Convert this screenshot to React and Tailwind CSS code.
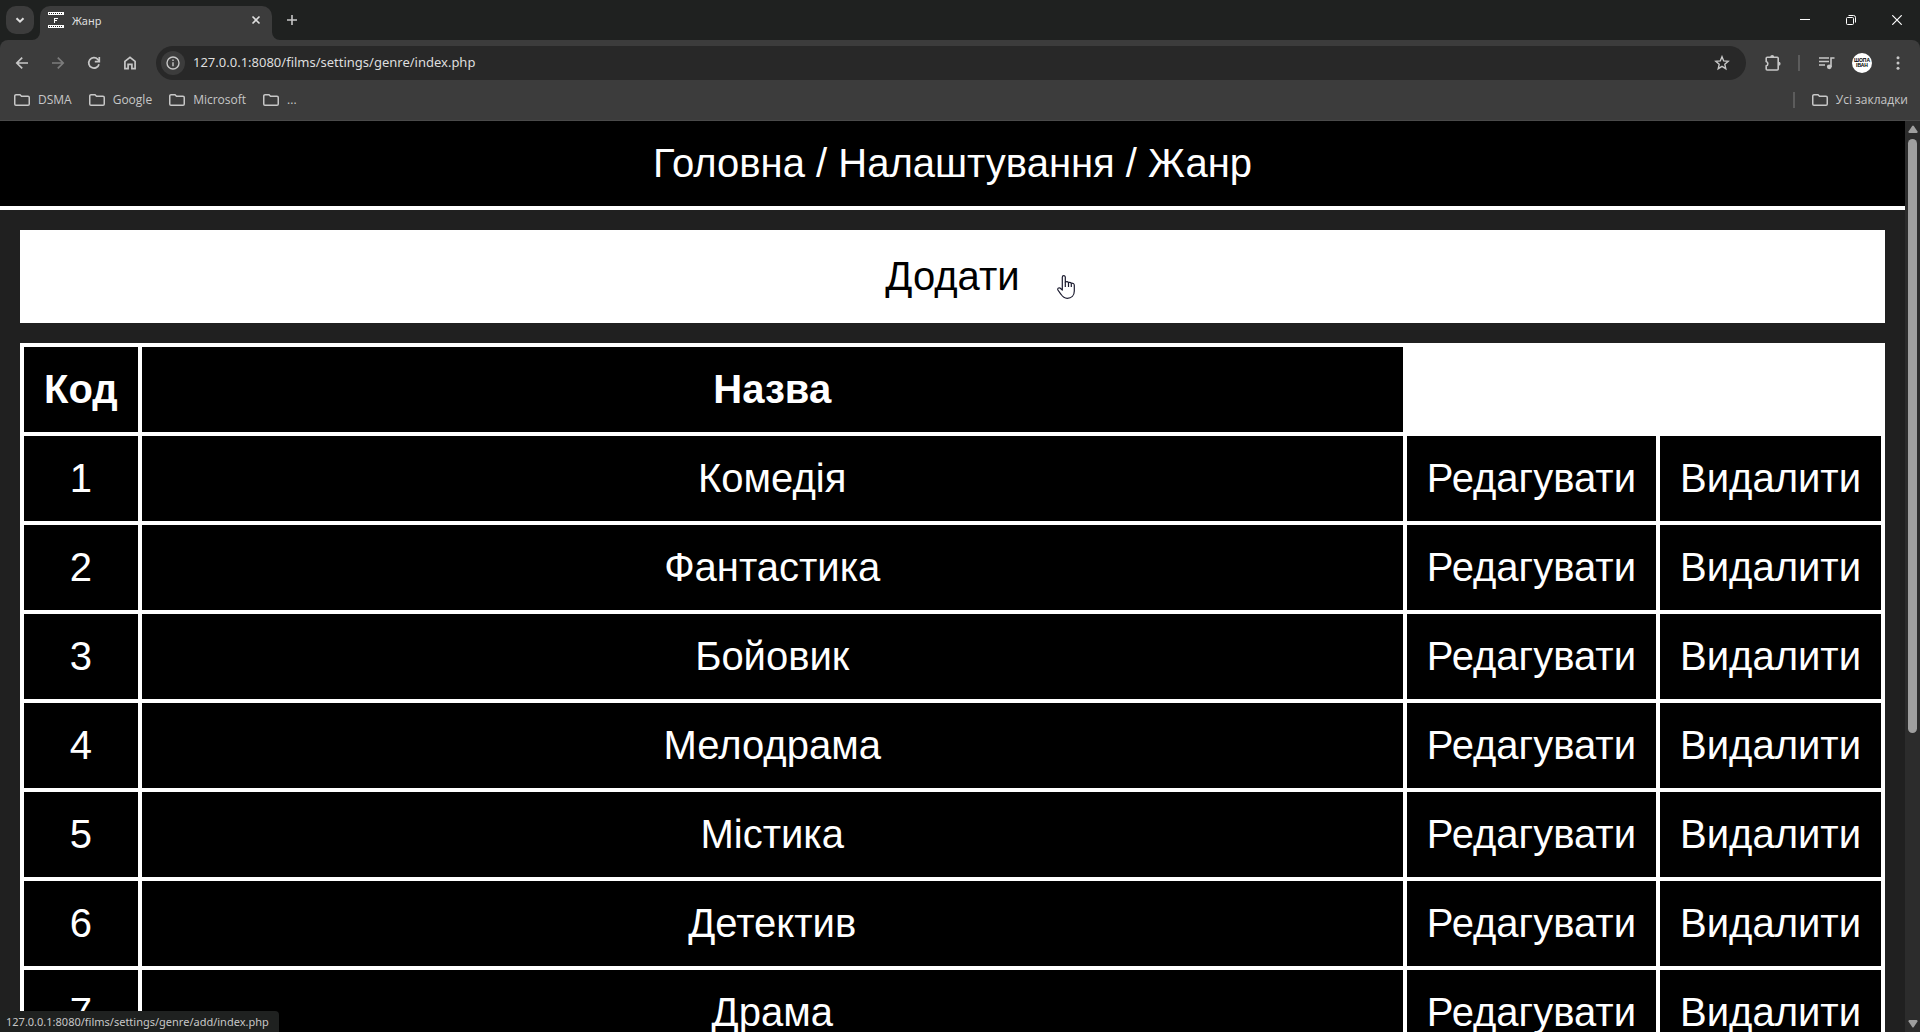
const genres = ['Комедія', 'Фантастика', 'Бойовик', 'Мелодрама', 'Містика', 'Детектив', 'Драма', 'Жахи', 'Трилер', 'Пригоди'];
const bookmarks = ['DSMA', 'Google', 'Microsoft', '...'];

function Icon({ size = 20, sw = 1.7, className = '', children }) {
  return (
    <svg
      width={size}
      height={size}
      viewBox={`0 0 ${size} ${size}`}
      fill="none"
      stroke="currentColor"
      strokeWidth={sw}
      className={`shrink-0 ${className}`}
      aria-hidden="true"
    >
      {children}
    </svg>
  );
}

function FolderIcon() {
  return (
    <svg width="16" height="12" viewBox="0 0 16 12" fill="none" stroke="currentColor" strokeWidth="1.5" className="shrink-0" aria-hidden="true">
      <path d="M.75 2A1.25 1.25 0 0 1 2 .75H6l1.5 1.5H14A1.25 1.25 0 0 1 15.25 3.5V10A1.25 1.25 0 0 1 14 11.25H2A1.25 1.25 0 0 1 .75 10Z" />
    </svg>
  );
}

function TabStrip() {
  return (
    <div className="flex h-10 shrink-0 items-start bg-[#1f2120] text-[#dedede]">
      <button aria-label="Пошук вкладок" className="mt-1.5 ml-1.5 flex size-7 items-center justify-center rounded-[10px] bg-[#3c3c3c]">
        <Icon size={10} sw={2}><path d="M1.5 3.2 5 6.7l3.5-3.5" /></Icon>
      </button>
      <div className="flex pt-1.5">
        <div className="-ml-0.5 flex w-2 items-end self-stretch">
          <svg width="8" height="8" viewBox="0 0 8 8" className="block" aria-hidden="true"><path d="M8 0v8H0a8 8 0 0 0 8-8Z" fill="#3c3c3c" /></svg>
        </div>
        <div className="flex h-[34px] w-[232px] items-center rounded-t-[10px] bg-[#3c3c3c] pr-2.5 pb-1.5 pl-2">
          <svg width="16" height="16" viewBox="0 0 16 16" shapeRendering="crispEdges" aria-hidden="true">
            <path d="M0 0h16v3H0zM0 13h16v3H0z" fill="#fff" />
            <path d="M1 1h1v1H1zM3 1h1v1H3zM5 1h1v1H5zM7 1h1v1H7zM9 1h1v1H9zM11 1h1v1h-1zM13 1h1v1h-1zM1 14h1v1H1zM3 14h1v1H3zM5 14h1v1H5zM7 14h1v1H7zM9 14h1v1H9zM11 14h1v1h-1zM13 14h1v1h-1z" fill="#222" />
            <path d="M6 6h4v1H7v1h2v1H7v2H6z" fill="#fff" />
          </svg>
          <span className="ml-2 flex-1 pt-0.5 text-[11px]">Жанр</span>
          <button aria-label="Закрити вкладку" className="flex size-3">
            <Icon size={12} sw={1.6}><path d="m2.5 2.5 7 7m0-7-7 7" /></Icon>
          </button>
        </div>
        <div className="flex w-2 items-end">
          <svg width="8" height="8" viewBox="0 0 8 8" className="block" aria-hidden="true"><path d="M0 0v8h8a8 8 0 0 1-8-8Z" fill="#3c3c3c" /></svg>
        </div>
      </div>
      <button aria-label="Нова вкладка" className="ml-1.5 flex h-10 items-center text-[#c7c7c7]">
        <Icon size={12} sw={1.6}><path d="M6 1v10M1 6h10" /></Icon>
      </button>
      <div className="ml-auto flex text-white">
        <button aria-label="Згорнути" className="flex h-10 w-[46px] items-center justify-center">
          <Icon size={10} sw={1}><path d="M0 4.5h10" /></Icon>
        </button>
        <button aria-label="Відновити" className="flex h-10 w-[46px] items-center justify-center">
          <Icon size={10} sw={1}>
            <rect x=".5" y="2.5" width="7" height="7" rx="1" />
            <path d="M2.5 .5h5a2 2 0 0 1 2 2v5" />
          </Icon>
        </button>
        <button aria-label="Закрити" className="flex h-10 w-[46px] items-center justify-center">
          <Icon size={10} sw={1.2}><path d="m.3.3 9.4 9.4m0-9.4L.3 9.7" /></Icon>
        </button>
      </div>
    </div>
  );
}

function NavButton({ label, className = '', children }) {
  return (
    <button aria-label={label} className={`flex w-9 justify-center ${className}`}>
      <Icon size={16} sw={1.7}>{children}</Icon>
    </button>
  );
}

function Toolbar() {
  return (
    <div className="flex h-[46px] items-center bg-[#3c3c3c] pr-3.5 pl-1 text-[#c7c7c7]">
      <NavButton label="Назад"><path d="M14 8H3m5.2-5.4L2.8 8l5.4 5.4" /></NavButton>
      <NavButton label="Вперед" className="text-[#7c7c7c]"><path d="M2 8h11M7.8 2.6 13.2 8l-5.4 5.4" /></NavButton>
      <NavButton label="Оновити">
        <path d="M13 9.2A5.2 5.2 0 1 1 11.8 4.4L13.2 6" />
        <path d="M13.3 2v4.6H8.8" />
      </NavButton>
      <NavButton label="Домашня сторінка">
        <path d="M2.9 6.4 8 2.4l5.1 4v7.3H9.9V9.4H6.1v4.3H2.9Z" />
      </NavButton>
      <div className="ml-2 flex h-[34px] flex-1 items-center rounded-full bg-[#282828] pr-4 pl-[5px]">
        <button aria-label="Відомості про сайт" className="flex size-6 items-center justify-center rounded-full bg-[#3c3c3c]">
          <Icon size={14} sw={1.4}>
            <circle cx="7" cy="7" r="6" />
            <path d="M7 6.2v4M7 3.6v1.5" />
          </Icon>
        </button>
        <input
          aria-label="Адреса"
          defaultValue="127.0.0.1:8080/films/settings/genre/index.php"
          className="ml-2 min-w-0 flex-1 bg-transparent text-[13px] text-[#dedede] outline-none"
        />
        <button aria-label="Додати закладку">
          <Icon size={16} sw={1.4}>
            <path d="m8 1.7 1.7 4.2 4.5.4-3.4 3 1 4.4L8 11.4l-3.8 2.3 1-4.4-3.4-3 4.5-.4Z" />
          </Icon>
        </button>
      </div>
      <button aria-label="Розширення" className="ml-[18px]">
        <Icon size={18} sw={1.6}>
          <path d="M3.2 3.3h10a1 1 0 0 1 1 1V15a1 1 0 0 1-1 1h-10a1 1 0 0 1-1-1v-3.1a2.3 2.3 0 0 0 0-4.4V4.3a1 1 0 0 1 1-1Z" />
          <path d="M6.2 3a2 2 0 0 1 4 0ZM14.6 7.700a2 2 0 0 1 0 4Z" fill="currentColor" stroke="none" />
        </Icon>
      </button>
      <span className="ml-4 h-4 w-0.5 bg-[#5c5c5c]" />
      <button aria-label="Керування медіа" className="ml-[18px]">
        <Icon size={18} sw={1.6}>
          <path d="M1 4h10M1 7.5h10M1 11h6M13 13V4h3.5" />
          <circle cx="11.3" cy="12.8" r="2.4" fill="currentColor" stroke="none" />
        </Icon>
      </button>
      <button
        aria-label="Профіль"
        className="ml-4 flex size-5 flex-col items-center justify-center rounded-full bg-white font-['Liberation_Sans',sans-serif] text-[5px] leading-[5px] font-bold text-black"
      >
        <span>ШОПА</span>
        <span>ІВАН</span>
      </button>
      <button aria-label="Меню" className="ml-[18px]">
        <svg width="16" height="16" viewBox="0 0 16 16" fill="currentColor" aria-hidden="true">
          <circle cx="8" cy="2.8" r="1.5" />
          <circle cx="8" cy="8" r="1.5" />
          <circle cx="8" cy="13.2" r="1.5" />
        </svg>
      </button>
    </div>
  );
}

function BookmarkBar() {
  return (
    <div className="flex h-[35px] items-center gap-[17px] border-b border-[#4a4a4a] bg-[#3c3c3c] pr-3 pb-1.5 pl-3.5 font-['Open_Sans',sans-serif] text-xs text-[#c7c7c7]">
      {bookmarks.map((b) => (
        <button key={b} className="flex items-center gap-2">
          <FolderIcon />
          {b}
        </button>
      ))}
      <span className="ml-auto h-4 w-0.5 bg-[#5c5c5c]" />
      <button className="flex items-center gap-2">
        <FolderIcon />
        Усі закладки
      </button>
    </div>
  );
}

function Scrollbar() {
  return (
    <div className="flex w-[15px] shrink-0 flex-col items-center bg-[#2c2c2c] py-1 text-[#9f9f9f]">
      <svg width="10" height="8" viewBox="0 0 10 8" className="shrink-0" fill="currentColor" aria-hidden="true"><path d="M4.2 1Q5 0 5.8 1L9.5 6.5Q9.8 8 8.6 8H1.4Q.2 8 .5 6.5Z" /></svg>
      <div className="mt-1.5 mb-2 flex w-[9px] flex-1 flex-col">
        <div className="h-[68%] rounded-full bg-[#9f9f9f]" />
      </div>
      <svg width="10" height="8" viewBox="0 0 10 8" className="shrink-0" fill="currentColor" aria-hidden="true"><path d="M4.2 7Q5 8 5.8 7L9.5 1.5Q9.8 0 8.600 0H1.4Q.2 0 .5 1.5Z" /></svg>
    </div>
  );
}

function HandCursor() {
  return (
    <svg width="18" height="24" viewBox="0 0 18 24" className="absolute top-[154px] left-[1057px]" fill="#fff" stroke="#1a1a2e" strokeWidth="1.2" strokeLinejoin="round" aria-hidden="true">
      <path d="M5.300 15V2.200a1.500 1.500 0 0 1 3 0V7Q10.500 6 11.500 7.500q1.800-.6 2.800.6Q17.300 8 17.300 10.500V16c0 4.500-3 7.300-7 7.300-3.200 0-4.700-1.500-6.300-4L.9 15C.3 13.500 1.700 12.300 3 13Z" />
      <path d="M8.300 7v5M11.500 7.500v4.500M14.300 8.200v3.800" fill="none" />
    </svg>
  );
}

function GenrePage() {
  return (
    <main className="min-w-0 flex-1 overflow-hidden bg-[#202020] font-['Liberation_Sans',Arial,sans-serif] text-[40px] leading-[45px] text-white">
      <nav className="border-b-4 border-white bg-black p-5 text-center">
        <a href="#home">Головна</a> / <a href="#settings">Налаштування</a> / <a href="#genre">Жанр</a>
      </nav>
      <div className="flex flex-col gap-5 p-5">
        <a href="#add" className="border-4 border-white bg-white p-5 text-center text-black">Додати</a>
        <table className="w-full border-separate border-spacing-1 bg-white text-center">
          <thead>
            <tr>
              <th className="bg-black p-5">Код</th>
              <th className="w-full bg-black p-5">Назва</th>
            </tr>
          </thead>
          <tbody>
            {genres.map((g, i) => (
              <tr key={g}>
                <td className="bg-black p-5">{i + 1}</td>
                <td className="bg-black p-5">{g}</td>
                <td className="bg-black p-5"><a href="#edit">Редагувати</a></td>
                <td className="bg-black p-5"><a href="#delete">Видалити</a></td>
              </tr>
            ))}
          </tbody>
        </table>
      </div>
    </main>
  );
}

export default function App() {
  return (
    <div className="flex h-screen flex-col overflow-hidden bg-[#1f2120] font-['Noto_Sans','Open_Sans',sans-serif]">
      <TabStrip />
      <div className="shrink-0 overflow-hidden rounded-t-lg">
        <Toolbar />
        <BookmarkBar />
      </div>
      <div className="relative flex min-h-0 flex-1">
        <GenrePage />
        <Scrollbar />
        <HandCursor />
        <div className="absolute bottom-0 left-0 rounded-tr bg-[#1f2120] pr-2.5 pl-1.5 text-[11px] leading-[21px] text-[#c7c7c7]">
          127.0.0.1:8080/films/settings/genre/add/index.php
        </div>
      </div>
    </div>
  );
}
